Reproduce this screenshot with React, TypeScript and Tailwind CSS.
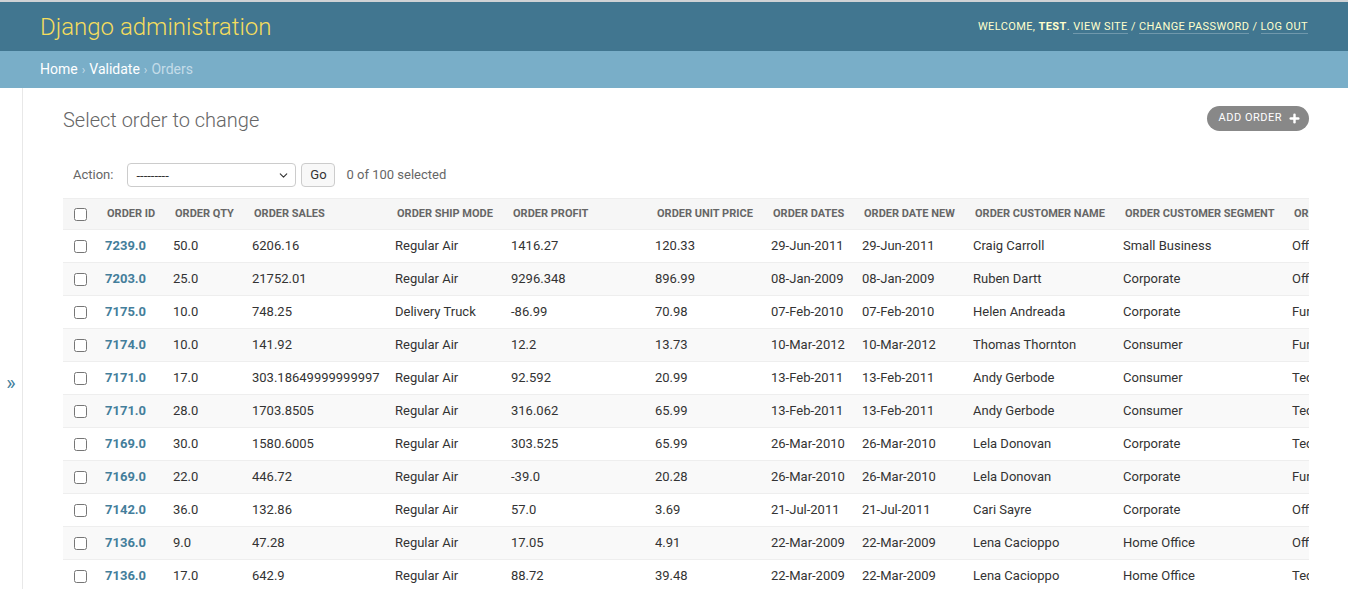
import { Plus, ChevronDown } from 'lucide-react';

type Row = {
  id: string;
  qty: string;
  sales: string;
  ship: string;
  profit: string;
  unit: string;
  date: string;
  dateNew: string;
  name: string;
  segment: string;
  category: string;
};

const ROWS: Row[] = [
  { id: '7239.0', qty: '50.0', sales: '6206.16', ship: 'Regular Air', profit: '1416.27', unit: '120.33', date: '29-Jun-2011', dateNew: '29-Jun-2011', name: 'Craig Carroll', segment: 'Small Business', category: 'Office Supplies' },
  { id: '7203.0', qty: '25.0', sales: '21752.01', ship: 'Regular Air', profit: '9296.348', unit: '896.99', date: '08-Jan-2009', dateNew: '08-Jan-2009', name: 'Ruben Dartt', segment: 'Corporate', category: 'Office Supplies' },
  { id: '7175.0', qty: '10.0', sales: '748.25', ship: 'Delivery Truck', profit: '-86.99', unit: '70.98', date: '07-Feb-2010', dateNew: '07-Feb-2010', name: 'Helen Andreada', segment: 'Corporate', category: 'Furniture' },
  { id: '7174.0', qty: '10.0', sales: '141.92', ship: 'Regular Air', profit: '12.2', unit: '13.73', date: '10-Mar-2012', dateNew: '10-Mar-2012', name: 'Thomas Thornton', segment: 'Consumer', category: 'Furniture' },
  { id: '7171.0', qty: '17.0', sales: '303.18649999999997', ship: 'Regular Air', profit: '92.592', unit: '20.99', date: '13-Feb-2011', dateNew: '13-Feb-2011', name: 'Andy Gerbode', segment: 'Consumer', category: 'Technology' },
  { id: '7171.0', qty: '28.0', sales: '1703.8505', ship: 'Regular Air', profit: '316.062', unit: '65.99', date: '13-Feb-2011', dateNew: '13-Feb-2011', name: 'Andy Gerbode', segment: 'Consumer', category: 'Technology' },
  { id: '7169.0', qty: '30.0', sales: '1580.6005', ship: 'Regular Air', profit: '303.525', unit: '65.99', date: '26-Mar-2010', dateNew: '26-Mar-2010', name: 'Lela Donovan', segment: 'Corporate', category: 'Technology' },
  { id: '7169.0', qty: '22.0', sales: '446.72', ship: 'Regular Air', profit: '-39.0', unit: '20.28', date: '26-Mar-2010', dateNew: '26-Mar-2010', name: 'Lela Donovan', segment: 'Corporate', category: 'Furniture' },
  { id: '7142.0', qty: '36.0', sales: '132.86', ship: 'Regular Air', profit: '57.0', unit: '3.69', date: '21-Jul-2011', dateNew: '21-Jul-2011', name: 'Cari Sayre', segment: 'Corporate', category: 'Office Supplies' },
  { id: '7136.0', qty: '9.0', sales: '47.28', ship: 'Regular Air', profit: '17.05', unit: '4.91', date: '22-Mar-2009', dateNew: '22-Mar-2009', name: 'Lena Cacioppo', segment: 'Home Office', category: 'Office Supplies' },
  { id: '7136.0', qty: '17.0', sales: '642.9', ship: 'Regular Air', profit: '88.72', unit: '39.48', date: '22-Mar-2009', dateNew: '22-Mar-2009', name: 'Lena Cacioppo', segment: 'Home Office', category: 'Technology' },
];

const HEADERS = [
  'Order id',
  'Order qty',
  'Order sales',
  'Order ship mode',
  'Order profit',
  'Order unit price',
  'Order dates',
  'Order date new',
  'Order customer name',
  'Order customer segment',
  'Order product category',
];

export default function App() {
  return (
    <div className="min-h-screen bg-white font-['Roboto',sans-serif] text-[#333]">
      <div className="h-[2px] bg-[#cfd2d5]" />

      {/* Header */}
      <div className="flex h-[49px] items-center justify-between bg-[#417690] px-10">
        <div className="text-[24px] font-light text-[#f5dd5d]">Django administration</div>
        <div className="pt-[2px] text-[11px] uppercase tracking-[0.4px] text-[#ffc]">
          Welcome, <strong className="font-bold">Test</strong>.{' '}
          <a className="border-b border-white/25">View site</a> /{' '}
          <a className="border-b border-white/25">Change password</a> /{' '}
          <a className="border-b border-white/25">Log out</a>
        </div>
      </div>

      {/* Breadcrumbs */}
      <div className="flex h-[37px] items-center bg-[#79aec8] px-10 text-[14px] text-[#c4dce8]">
        <a className="text-white">Home</a>
        <span className="mx-[4px] text-[12px]">›</span>
        <a className="text-white">Validate</a>
        <span className="mx-[4px] text-[12px]">›</span>
        <span>Orders</span>
      </div>

      <div className="flex">
        {/* Sidebar toggle */}
        <div className="flex h-screen w-[23px] shrink-0 items-center justify-center border-r border-[#e8e8e8]">
          <span className="text-[20px] leading-none text-[#447e9b]">»</span>
        </div>

        {/* Content */}
        <div className="min-w-0 flex-1 pl-10 pr-[39px] pt-5">
          <div className="flex items-start justify-between">
            <h1 className="text-[20px] font-light leading-[24px] text-[#666]">Select order to change</h1>
            <a className="-mt-[2px] flex h-[25px] items-center gap-[6px] rounded-full bg-[#888] pl-[12px] pr-[8px] text-[11px] uppercase tracking-[0.5px] text-white">
              Add order
              <Plus size={13} strokeWidth={4.5} />
            </a>
          </div>

          {/* Actions */}
          <div className="mt-[31px] flex h-[24px] items-center pl-[10px] text-[13px] text-[#666]">
            <span>Action:</span>
            <div className="relative ml-[14px] h-[24px] w-[169px] rounded-[4px] border border-[#ccc] bg-white">
              <span className="absolute left-[8px] top-[2px] text-[13px] text-[#333]">---------</span>
              <ChevronDown size={13} strokeWidth={2} className="absolute right-[5px] top-[5px] text-[#333]" />
            </div>
            <button className="ml-[5px] h-[24px] w-[34px] rounded-[4px] border border-[#ccc] bg-[#f8f8f8] text-[13px] text-[#333]">
              Go
            </button>
            <span className="ml-[11px]">0 of 100 selected</span>
          </div>

          {/* Results */}
          <div className="mt-[11px] w-full overflow-hidden">
            <table className="w-[1371px] table-fixed border-collapse text-[13px]">
              <colgroup>
                <col className="w-[34px]" />
                <col className="w-[68px]" />
                <col className="w-[79px]" />
                <col className="w-[143px]" />
                <col className="w-[116px]" />
                <col className="w-[144px]" />
                <col className="w-[116px]" />
                <col className="w-[91px]" />
                <col className="w-[111px]" />
                <col className="w-[150px]" />
                <col className="w-[169px]" />
                <col className="w-[150px]" />
              </colgroup>
              <thead>
                <tr className="h-[31px] border-y border-[#eee] bg-[#f6f6f6]">
                  <th className="pl-[11px] text-left align-middle">
                    <input type="checkbox" className="m-0 block h-[13px] w-[13px]" />
                  </th>
                  {HEADERS.map((h) => (
                    <th
                      key={h}
                      className="whitespace-nowrap pl-[10px] text-left align-middle text-[11px] font-bold uppercase text-[#666]"
                    >
                      {h}
                    </th>
                  ))}
                </tr>
              </thead>
              <tbody>
                {ROWS.map((r, i) => (
                  <tr key={i} className={`h-[33px] border-b border-[#eee] ${i % 2 === 1 ? 'bg-[#f9f9f9]' : 'bg-white'}`}>
                    <td className="pl-[11px] align-middle">
                      <input type="checkbox" className="m-0 block h-[13px] w-[13px]" />
                    </td>
                    <th className="whitespace-nowrap pl-[8px] text-left font-bold text-[#447e9b]">{r.id}</th>
                    <td className="whitespace-nowrap pl-[8px]">{r.qty}</td>
                    <td className="whitespace-nowrap pl-[8px]">{r.sales}</td>
                    <td className="whitespace-nowrap pl-[8px]">{r.ship}</td>
                    <td className="whitespace-nowrap pl-[8px]">{r.profit}</td>
                    <td className="whitespace-nowrap pl-[8px]">{r.unit}</td>
                    <td className="whitespace-nowrap pl-[8px]">{r.date}</td>
                    <td className="whitespace-nowrap pl-[8px]">{r.dateNew}</td>
                    <td className="whitespace-nowrap pl-[8px]">{r.name}</td>
                    <td className="whitespace-nowrap pl-[8px]">{r.segment}</td>
                    <td className="whitespace-nowrap pl-[8px]">{r.category}</td>
                  </tr>
                ))}
              </tbody>
            </table>
          </div>
        </div>
      </div>
    </div>
  );
}
